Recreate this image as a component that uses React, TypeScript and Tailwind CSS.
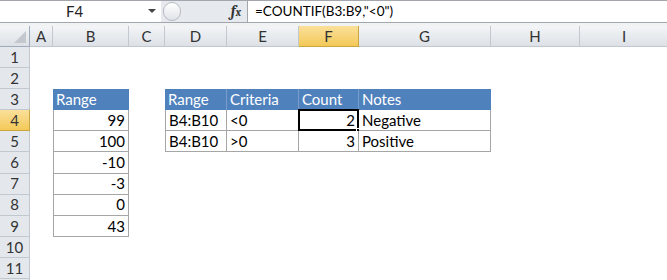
import React from 'react';

type Cell = { v: string; kind: 'head' | 'data'; right?: boolean; first?: boolean };

const columns = ['A', 'B', 'C', 'D', 'E', 'F', 'G', 'H', 'I'];
const rows = [1, 2, 3, 4, 5, 6, 7, 8, 9, 10, 11, 12];

const cells: Record<string, Cell> = {
  B3: { v: 'Range', kind: 'head', first: true },
  B4: { v: '99', kind: 'data', right: true, first: true },
  B5: { v: '100', kind: 'data', right: true, first: true },
  B6: { v: '-10', kind: 'data', right: true, first: true },
  B7: { v: '-3', kind: 'data', right: true, first: true },
  B8: { v: '0', kind: 'data', right: true, first: true },
  B9: { v: '43', kind: 'data', right: true, first: true },
  D3: { v: 'Range', kind: 'head', first: true },
  E3: { v: 'Criteria', kind: 'head' },
  F3: { v: 'Count', kind: 'head' },
  G3: { v: 'Notes', kind: 'head' },
  D4: { v: 'B4:B10', kind: 'data', first: true },
  E4: { v: '<0', kind: 'data' },
  F4: { v: '2', kind: 'data', right: true },
  G4: { v: 'Negative', kind: 'data' },
  D5: { v: 'B4:B10', kind: 'data', first: true },
  E5: { v: '>0', kind: 'data' },
  F5: { v: '3', kind: 'data', right: true },
  G5: { v: 'Positive', kind: 'data' },
};

const font = { fontFamily: 'Lato, "Open Sans", sans-serif' };

function FormulaBar() {
  return (
    <div className="flex h-[23px] border-t border-b border-[#a3a7ad] bg-white">
      <div className="relative flex w-[161px] items-center justify-center text-[15px] text-[#222]">
        <span className="-ml-[12px]">F4</span>
        <span className="absolute right-[5px] top-[8px] h-0 w-0 border-x-[4px] border-t-[4px] border-x-transparent border-t-[#444]" />
      </div>
      <div className="flex w-[86px] items-center bg-[#e6e9ed]">
        <div className="ml-[2px] h-[19px] w-[18px] rounded-full border border-[#b7bcc3] bg-gradient-to-b from-white to-[#dfe3e8]" />
        <div className="flex-1" />
        <span className="mr-[6px] font-serif text-[15px] font-bold italic text-[#333]">
          f<span className="text-[11px]">x</span>
        </span>
      </div>
      <div className="flex flex-1 items-center border-l border-[#a3a7ad] pl-[7px] text-[13.5px] text-black">
        =COUNTIF(B3:B9,"&lt;0")
      </div>
    </div>
  );
}

function DataCell({ id }: { id: string }) {
  const c = cells[id];
  if (!c) return <div className="bg-white" />;
  const selected = id === 'F4';
  if (c.kind === 'head') {
    return (
      <div
        className={`flex items-center bg-[#4f81bd] px-[3px] text-white ${
          id !== 'G3' && id !== 'B3' ? 'border-r border-[#7a9ccb]' : ''
        }`}
      >
        {c.v}
      </div>
    );
  }
  return (
    <div
      className={`relative flex items-center border-b border-r border-[#a6a6a6] bg-white px-[3px] text-black ${
        c.first ? 'border-l' : ''
      } ${c.right ? 'justify-end' : ''}`}
    >
      {c.v}
      {selected && (
        <>
          <div className="absolute -left-[1px] -top-[1px] -right-[1px] -bottom-[1px] border-[2px] border-black" />
          <div className="absolute -bottom-[4px] -right-[4px] h-[6px] w-[6px] border border-white bg-black" />
        </>
      )}
    </div>
  );
}

export default function App() {
  return (
    <div className="h-[280px] w-[667px] overflow-hidden bg-white" style={font}>
      <FormulaBar />
      <div className="h-[3px] bg-[#f0f2f4]" />
      <div className="grid grid-cols-[30px_23px_76px_36px_62px_72px_60px_132px_89px_89px] grid-rows-[21px_repeat(12,21.1px)] text-[15px]">
        {/* column headers */}
        <div className="relative border-b border-r border-[#9eabba] bg-gradient-to-b from-[#f3f5f7] to-[#dde1e6]">
          <div className="absolute bottom-[3px] right-[3px] h-0 w-0 border-b-[12px] border-l-[12px] border-l-transparent border-b-[#c3c8ce]" />
        </div>
        {columns.map((col) => (
          <div
            key={col}
            className={`flex items-center justify-center border-b border-r text-[#333] ${
              col === 'F'
                ? 'border-[#c9a640] bg-gradient-to-b from-[#fbe09a] to-[#f3c955]'
                : 'border-[#c2c8d0] bg-gradient-to-b from-[#f3f5f7] to-[#dde1e6]'
            }`}
          >
            {col}
          </div>
        ))}

        {rows.map((r) => (
          <React.Fragment key={r}>
            <div
              className={`flex items-center justify-center border-b border-r text-[#333] ${
                r === 4
                  ? 'border-[#c9a640] bg-gradient-to-b from-[#fbe09a] to-[#f3c955]'
                  : 'border-[#c2c8d0] bg-[#e4e8ed]'
              }`}
            >
              {r}
            </div>
            {columns.map((col) => (
              <DataCell key={col + r} id={col + r} />
            ))}
          </React.Fragment>
        ))}
      </div>
    </div>
  );
}
